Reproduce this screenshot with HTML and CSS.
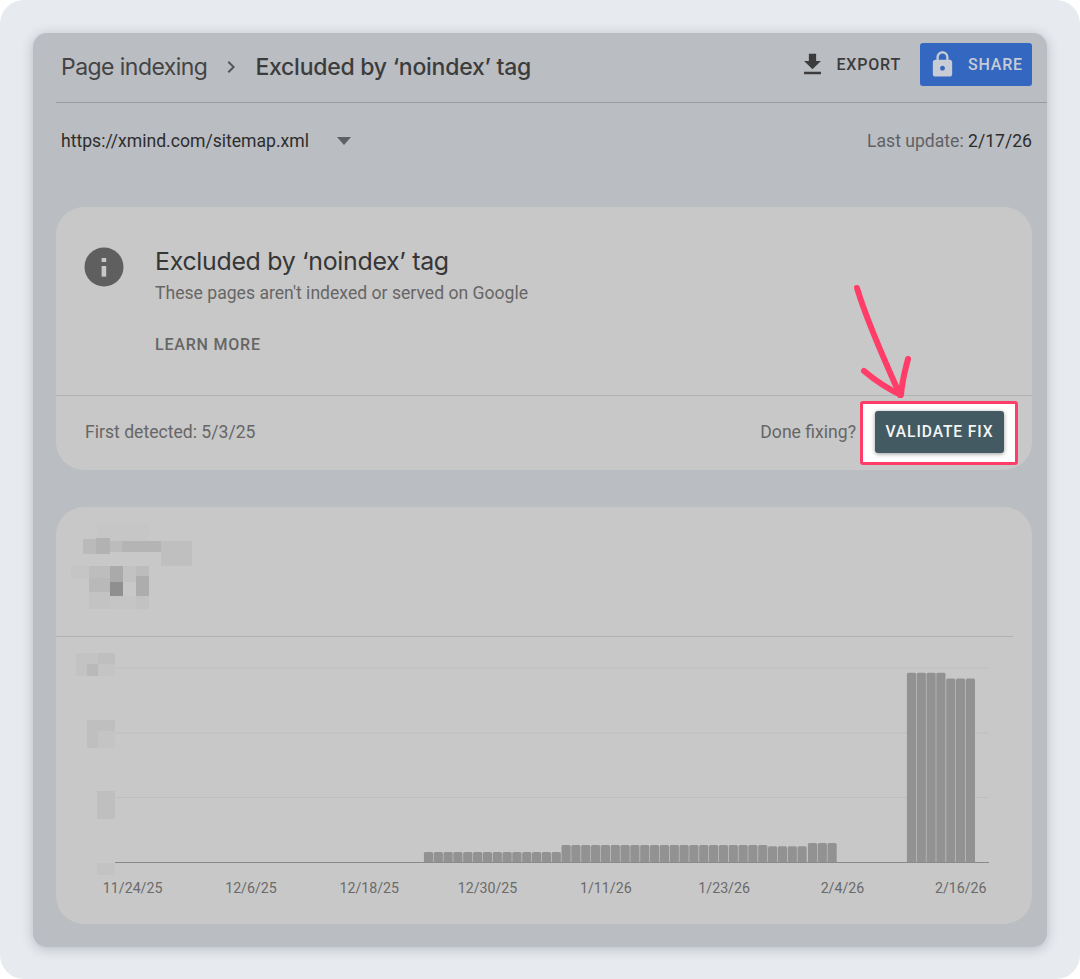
FILE: index.html
```html
<!DOCTYPE html>
<html lang="en">

<head>
    <meta charset="UTF-8">
    <meta name="viewport" content="width=device-width, initial-scale=1.0">
    <link rel="stylesheet" href="styles.css">
    <title>Page indexing</title>
</head>

<body>
    <div class="frame">
        <div class="panel">
            <header class="topbar">
                <div class="crumbs">
                    <span class="crumb">Page indexing</span>
                    <svg class="chevron" viewBox="0 0 24 24"><path d="M8.6 16.6 13.2 12 8.6 7.4 10 6l6 6-6 6z"/></svg>
                    <span class="crumb crumb-current">Excluded by ‘noindex’ tag</span>
                </div>
                <div class="actions">
                    <button class="export-btn">
                        <svg class="icon" viewBox="0 0 24 24"><path d="M19 9h-4V3H9v6H5l7 7 7-7zM5 18v2h14v-2H5z"/></svg>
                        EXPORT
                    </button>
                    <button class="share-btn">
                        <svg class="icon" viewBox="0 0 24 24"><path d="M18 8h-1V6c0-2.76-2.24-5-5-5S7 3.24 7 6v2H6c-1.1 0-2 .9-2 2v10c0 1.1.9 2 2 2h12c1.1 0 2-.9 2-2V10c0-1.1-.9-2-2-2zm-6 9c-1.1 0-2-.9-2-2s.9-2 2-2 2 .9 2 2-.9 2-2 2zm3.1-9H8.9V6c0-1.71 1.39-3.1 3.1-3.1 1.71 0 3.1 1.39 3.1 3.1v2z"/></svg>
                        SHARE
                    </button>
                </div>
            </header>

            <div class="filter-row">
                <div class="sitemap">
                    <span>https://xmind.com/sitemap.xml</span>
                    <span class="caret"></span>
                </div>
                <div class="last-update">Last update: <span class="date">2/17/26</span></div>
            </div>

            <section class="card issue-card">
                <div class="issue-main">
                    <svg class="info-icon" viewBox="0 0 40 40">
                        <circle cx="20" cy="20" r="19.5"/>
                        <rect class="info-mark" x="17.6" y="11" width="4.6" height="4"/>
                        <rect class="info-mark" x="17.6" y="19" width="4.6" height="10.6"/>
                    </svg>
                    <div class="issue-text">
                        <h2>Excluded by ‘noindex’ tag</h2>
                        <p>These pages aren't indexed or served on Google</p>
                        <a class="learn-more">LEARN MORE</a>
                    </div>
                </div>
                <div class="issue-footer">
                    <span class="footer-note">First detected: 5/3/25</span>
                    <div class="fix-group">
                        <span class="footer-note">Done fixing?</span>
                        <div class="highlight">
                            <button class="validate-btn">VALIDATE FIX</button>
                        </div>
                    </div>
                </div>
            </section>

            <section class="card chart-card">
                <div class="chart-head">
                    <!-- redacted summary numbers -->
                    <svg class="mosaic" viewBox="56 507 976 129">
                        <rect x="97" y="523" width="52" height="18" fill="#c6c6c6"/>
                        <rect x="83" y="539" width="13" height="15" fill="#bababa"/>
                        <rect x="96" y="538" width="14" height="16" fill="#b2b2b2"/>
                        <rect x="110" y="541" width="12" height="11" fill="#bcbcbc"/>
                        <rect x="122" y="541" width="39" height="11" fill="#b4b4b4"/>
                        <rect x="161" y="541" width="31" height="25" fill="#bfbfbf"/>
                        <rect x="71" y="566" width="18" height="12" fill="#c5c5c5"/>
                        <rect x="89" y="566" width="21" height="12" fill="#bdbdbd"/>
                        <rect x="89" y="578" width="21" height="14" fill="#b9b9b9"/>
                        <rect x="110" y="566" width="13" height="16" fill="#aaaaaa"/>
                        <rect x="110" y="582" width="13" height="14" fill="#8f8f8f"/>
                        <rect x="123" y="566" width="13" height="16" fill="#c2c2c2"/>
                        <rect x="136" y="566" width="13" height="10" fill="#bcbcbc"/>
                        <rect x="136" y="576" width="13" height="20" fill="#adadad"/>
                        <rect x="89" y="592" width="21" height="17" fill="#c3c3c3"/>
                        <rect x="110" y="596" width="26" height="13" fill="#c5c5c5"/>
                        <rect x="136" y="596" width="13" height="13" fill="#c2c2c2"/>
                    </svg>
                </div>
                <div class="chart-body">
                    <svg class="chart" viewBox="56 637 976 241">
                        <!-- redacted y axis labels -->
                        <g>
                            <rect x="76" y="653" width="22" height="23" fill="#c3c3c3"/>
                            <rect x="98" y="653" width="17" height="11" fill="#bfbfbf"/>
                            <rect x="87" y="664" width="11" height="12" fill="#b9b9b9"/>
                            <rect x="98" y="664" width="17" height="12" fill="#c4c4c4"/>
                            <rect x="87" y="720" width="11" height="28" fill="#bfbfbf"/>
                            <rect x="98" y="720" width="17" height="11" fill="#bfbfbf"/>
                            <rect x="98" y="731" width="17" height="17" fill="#c4c4c4"/>
                            <rect x="97" y="791" width="18" height="28" fill="#bfbfbf"/>
                            <rect x="97" y="863" width="18" height="12" fill="#c3c3c3"/>
                        </g>
                        <g class="grid">
                            <line x1="115" x2="989" y1="668" y2="668"/>
                            <line x1="115" x2="989" y1="733" y2="733"/>
                            <line x1="115" x2="989" y1="797.5" y2="797.5"/>
                        </g>
                        <g class="bars">
                            <rect x="423.9" y="852" width="9.2" height="11" rx="1.5"/>
                            <rect x="433.7" y="852" width="9.2" height="11" rx="1.5"/>
                            <rect x="443.5" y="852" width="9.2" height="11" rx="1.5"/>
                            <rect x="453.3" y="852" width="9.2" height="11" rx="1.5"/>
                            <rect x="463.2" y="852" width="9.2" height="11" rx="1.5"/>
                            <rect x="473" y="852" width="9.2" height="11" rx="1.5"/>
                            <rect x="482.8" y="852" width="9.2" height="11" rx="1.5"/>
                            <rect x="492.7" y="852" width="9.2" height="11" rx="1.5"/>
                            <rect x="502.5" y="852" width="9.2" height="11" rx="1.5"/>
                            <rect x="512.3" y="852" width="9.2" height="11" rx="1.5"/>
                            <rect x="522.2" y="852" width="9.2" height="11" rx="1.5"/>
                            <rect x="532" y="852" width="9.2" height="11" rx="1.5"/>
                            <rect x="541.8" y="852" width="9.2" height="11" rx="1.5"/>
                            <rect x="551.7" y="852" width="9.2" height="11" rx="1.5"/>
                            <rect x="561.5" y="845" width="9.2" height="18" rx="1.5"/>
                            <rect x="571.3" y="845" width="9.2" height="18" rx="1.5"/>
                            <rect x="581.2" y="845" width="9.2" height="18" rx="1.5"/>
                            <rect x="591" y="845" width="9.2" height="18" rx="1.5"/>
                            <rect x="600.8" y="845" width="9.2" height="18" rx="1.5"/>
                            <rect x="610.7" y="845" width="9.2" height="18" rx="1.5"/>
                            <rect x="620.5" y="845" width="9.2" height="18" rx="1.5"/>
                            <rect x="630.3" y="845" width="9.2" height="18" rx="1.5"/>
                            <rect x="640.2" y="845" width="9.2" height="18" rx="1.5"/>
                            <rect x="650" y="845" width="9.2" height="18" rx="1.5"/>
                            <rect x="659.8" y="845" width="9.2" height="18" rx="1.5"/>
                            <rect x="669.7" y="845" width="9.2" height="18" rx="1.5"/>
                            <rect x="679.5" y="845" width="9.2" height="18" rx="1.5"/>
                            <rect x="689.3" y="845" width="9.2" height="18" rx="1.5"/>
                            <rect x="699.2" y="845" width="9.2" height="18" rx="1.5"/>
                            <rect x="709" y="845" width="9.2" height="18" rx="1.5"/>
                            <rect x="718.8" y="845" width="9.2" height="18" rx="1.5"/>
                            <rect x="728.7" y="845" width="9.2" height="18" rx="1.5"/>
                            <rect x="738.5" y="845" width="9.2" height="18" rx="1.5"/>
                            <rect x="748.3" y="845" width="9.2" height="18" rx="1.5"/>
                            <rect x="758.2" y="845" width="9.2" height="18" rx="1.5"/>
                            <rect x="768" y="846.3" width="9.2" height="16.7" rx="1.5"/>
                            <rect x="777.8" y="846.3" width="9.2" height="16.7" rx="1.5"/>
                            <rect x="787.7" y="846.3" width="9.2" height="16.7" rx="1.5"/>
                            <rect x="797.5" y="846.3" width="9.2" height="16.7" rx="1.5"/>
                            <rect x="807.9" y="843" width="9.2" height="20" rx="1.5"/>
                            <rect x="817.7" y="843" width="9.2" height="20" rx="1.5"/>
                            <rect x="827.5" y="843" width="9.2" height="20" rx="1.5"/>
                            <rect x="906.9" y="672.7" width="9.2" height="190.3" rx="1.5"/>
                            <rect x="916.7" y="672.7" width="9.2" height="190.3" rx="1.5"/>
                            <rect x="926.5" y="672.7" width="9.2" height="190.3" rx="1.5"/>
                            <rect x="936.3" y="672.7" width="9.2" height="190.3" rx="1.5"/>
                            <rect x="946.2" y="678.5" width="9.2" height="184.5" rx="1.5"/>
                            <rect x="956" y="678.5" width="9.2" height="184.5" rx="1.5"/>
                            <rect x="965.8" y="678.5" width="9.2" height="184.5" rx="1.5"/>
                        </g>
                        <line class="axis" x1="115" x2="989" y1="862.5" y2="862.5"/>
                    </svg>
                    <div class="x-labels">
                        <span>11/24/25</span>
                        <span>12/6/25</span>
                        <span>12/18/25</span>
                        <span>12/30/25</span>
                        <span>1/11/26</span>
                        <span>1/23/26</span>
                        <span>2/4/26</span>
                        <span>2/16/26</span>
                    </div>
                </div>
            </section>

            <!-- hand drawn arrow pointing at the button -->
            <svg class="arrow" viewBox="0 0 80 130">
                <path class="arrow-shaft" d="M5 5C13 32 30 72 48 112"/>
                <path class="arrow-head" d="M12 88C24 98 36 106 49 112C50 98 53 88 56 76"/>
            </svg>
        </div>
    </div>
</body>

</html>
```

FILE: styles.css
```css
body {
    margin: 0;
    background-color: #fff;
    font-family: Roboto, Arial, sans-serif;
}

.frame {
    width: 1080px;
    height: 979px;
    box-sizing: border-box;
    padding: 33px;
    background-color: #e7eaee;
    border-radius: 24px;
}

.panel {
    position: relative;
    height: 914px;
    background-color: #babdc2;
    border-radius: 14px;
    box-shadow: 0 2px 12px rgba(70, 80, 95, 0.3);
}

/* top bar */
.topbar {
    display: flex;
    justify-content: space-between;
    align-items: center;
    height: 69px;
    margin-left: 23px;
    padding: 0 15px 0 5px;
    border-bottom: 1px solid #999c9c;
}

.crumbs {
    display: flex;
    align-items: center;
    margin-bottom: 2px;
}

.crumb {
    font-family: Inter, Roboto, sans-serif;
    font-size: 23px;
    letter-spacing: -0.55px;
    color: #444;
}

.crumb-current {
    font-weight: 500;
    letter-spacing: -0.25px;
    color: #3c3c3c;
}

.chevron {
    width: 24px;
    height: 24px;
    margin: 0 12px 0 12px;
    fill: #555;
}

.actions {
    display: flex;
    align-items: center;
    margin-bottom: 6px;
}

.icon {
    width: 29px;
    height: 29px;
    fill: currentColor;
}

.export-btn,
.share-btn {
    display: flex;
    align-items: center;
    border: none;
    background: none;
    padding: 0;
    font-family: Roboto, Arial, sans-serif;
    font-size: 16px;
    font-weight: 500;
    letter-spacing: 0.8px;
}

.export-btn {
    color: #3c3c3c;
    gap: 10px;
    margin-right: 19px;
}

.share-btn {
    width: 112px;
    height: 43px;
    box-sizing: border-box;
    padding-left: 8px;
    gap: 11px;
    background-color: #3367c0;
    border-radius: 3px;
    color: #c8ccd4;
}

/* sitemap row */
.filter-row {
    display: flex;
    justify-content: space-between;
    align-items: center;
    height: 76px;
    margin-bottom: 28px;
    padding: 0 15px 0 28px;
    font-size: 17.6px;
    color: #2d2d2d;
}

.sitemap {
    display: flex;
    align-items: center;
    gap: 28px;
}

.caret {
    width: 0;
    height: 0;
    border-left: 7px solid transparent;
    border-right: 7px solid transparent;
    border-top: 8px solid #5f6063;
}

.last-update {
    color: #606265;
}

.last-update .date {
    color: #2d2d2d;
}

/* cards */
.card {
    width: 976px;
    margin-left: 23px;
    background-color: #c8c8c8;
    border-radius: 28px;
}

.issue-card {
    margin-bottom: 37px;
}

.issue-main {
    display: flex;
    height: 188px;
    padding-left: 28px;
    border-bottom: 1px solid #b2b2b2;
}

.info-icon {
    width: 40px;
    height: 40px;
    margin-top: 40px;
    margin-right: 31px;
    fill: #5f5f5f;
}

.info-mark {
    fill: #c8c8c8;
}

.issue-text h2 {
    margin: 37px 0 0;
    font-family: Inter, Roboto, sans-serif;
    font-size: 24.9px;
    font-weight: 400;
    line-height: 34px;
    letter-spacing: -0.3px;
    color: #363636;
}

.issue-text p {
    margin: 3px 0 0;
    font-size: 17.6px;
    line-height: 24px;
    color: #666;
}

.learn-more {
    display: block;
    margin-top: 30px;
    font-size: 16px;
    font-weight: 500;
    line-height: 20px;
    letter-spacing: 0.8px;
    color: #666;
}

.issue-footer {
    display: flex;
    justify-content: space-between;
    align-items: center;
    height: 74px;
    padding: 0 14px 0 29px;
    font-size: 17.6px;
    color: #666;
}

.footer-note {
    margin-bottom: 2px;
}

.fix-group {
    display: flex;
    align-items: center;
    gap: 4px;
}

.highlight {
    box-sizing: border-box;
    width: 158px;
    height: 64px;
    padding: 7px 11px 0 12px;
    background-color: #fff;
    border: 3px solid #ff3d68;
    border-radius: 3px;
}

.validate-btn {
    width: 129px;
    height: 42px;
    padding: 0;
    border: none;
    border-radius: 3px;
    background-color: #445a63;
    box-shadow: 0 1px 4px rgba(0, 0, 0, 0.4);
    color: #f4f6f6;
    font-family: Roboto, Arial, sans-serif;
    font-size: 15.6px;
    font-weight: 500;
    letter-spacing: 0.9px;
}

.chart-card {
    height: 417px;
}

.chart-head {
    height: 130px;
    margin-right: 19px;
    border-bottom: 1px solid #b2b2b2;
    box-sizing: border-box;
}

.mosaic {
    display: block;
    width: 976px;
    height: 129px;
}

.chart {
    display: block;
    width: 976px;
    height: 241px;
}

.grid line {
    stroke: #bfbfbf;
    stroke-width: 1;
}

.bars rect {
    fill: #929292;
}

.axis {
    stroke: #8a8a8a;
    stroke-width: 1;
}

.x-labels {
    display: grid;
    grid-template-columns: repeat(8, 118.3px);
    margin-left: 17.5px;
    font-size: 14.2px;
    line-height: 20px;
    color: #6a6a6a;
    text-align: center;
}

.arrow {
    position: absolute;
    left: 819px;
    top: 250px;
    width: 80px;
    height: 130px;
    fill: none;
    stroke: #ff3d68;
    stroke-linecap: round;
    stroke-linejoin: round;
}

.arrow-shaft {
    stroke-width: 6px;
}

.arrow-head {
    stroke-width: 6px;
}
```
